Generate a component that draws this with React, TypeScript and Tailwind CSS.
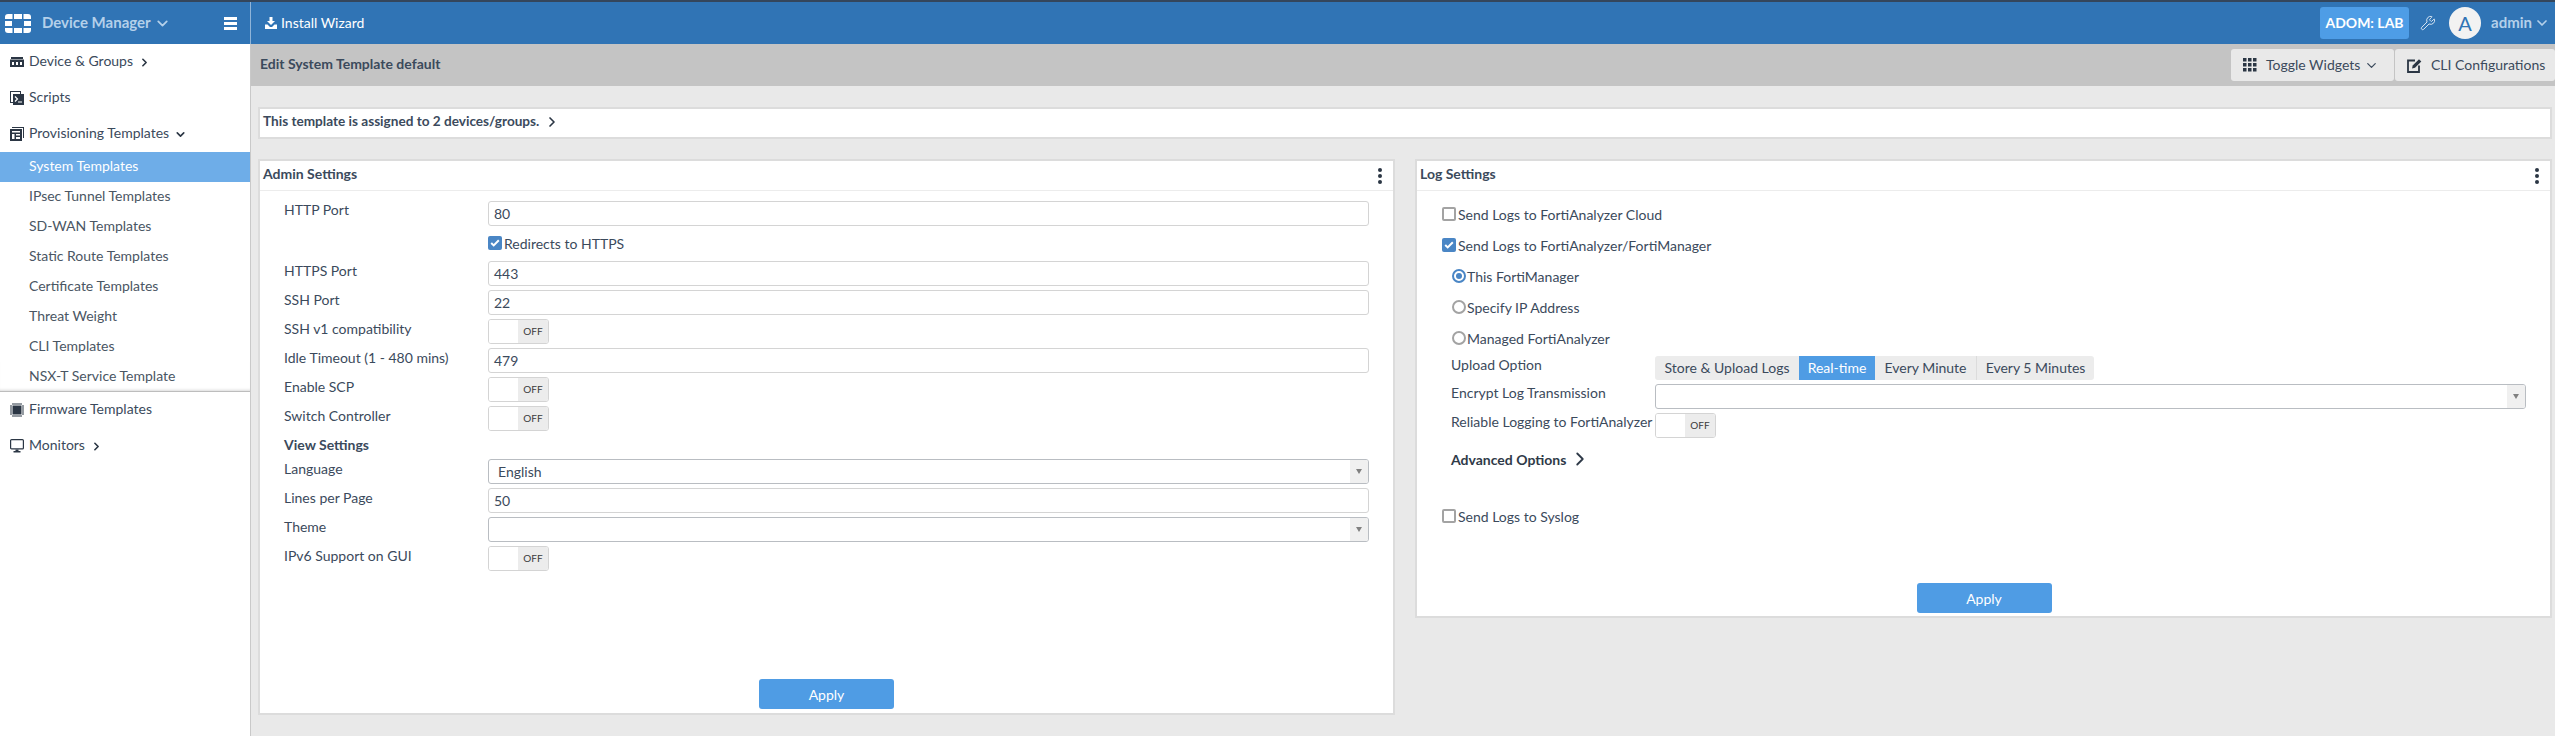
import type { ReactNode } from 'react';
import { ChevronDown, ChevronRight, Wrench } from 'lucide-react';

function Logo() {
    return (
        <svg width="26" height="19" viewBox="0 0 26 19" fill="#fff">
            <path d="M3 0h4.500v5H0V3q0-3 3-3z" />
            <path d="M9 0h8v5H9z" />
            <path d="M18.500 0H23q3 0 3 3v2h-7.500z" />
            <rect x="0" y="7" width="7" height="5" />
            <rect x="19" y="7" width="7" height="5" />
            <path d="M0 14h7.500v5H3q-3 0-3-3z" />
            <path d="M9 14h8v5H9z" />
            <path d="M18.500 14H26v2q0 3-3 3h-4.500z" />
        </svg>
    );
}

function DevicesIcon() {
    return (
        <svg width="14" height="14" viewBox="0 0 14 14" fill="#2b3644">
            <path d="M1 2h12v2H1z" />
            <path d="M0 4.500h14V12H0zM2 7v3h2V7zm4 0v3h2V7zm4 0v3h2V7z" fillRule="evenodd" />
        </svg>
    );
}

function ScriptsIcon() {
    return (
        <svg width="14" height="14" viewBox="0 0 14 14" fill="none">
            <rect x="0.500" y="0.500" width="10" height="11" stroke="#2b3644" />
            <rect x="3" y="3" width="11" height="11" fill="#2b3644" />
            <path d="M5 5.500l2.500 2.500L5 10.500M8 11h4" stroke="#fff" strokeWidth="1.200" />
        </svg>
    );
}

function TemplatesIcon() {
    return (
        <svg width="14" height="14" viewBox="0 0 14 14" fill="#2b3644">
            <path d="M2 0h12v11h-1V1H2z" />
            <path d="M0 2h12v12H0zM2 4v1.500h8V4zm0 3v5h2.500V7zm4 0v1.500h4V7zm0 3v2h4v-2z" fillRule="evenodd" />
        </svg>
    );
}

function ChipIcon() {
    return (
        <svg width="14" height="14" viewBox="0 0 14 14" fill="#2b3644">
            <rect x="2.500" y="2.500" width="9" height="9" />
            <path d="M0 3h2M0 5h2M0 7h2M0 9h2M0 11h2M12 3h2M12 5h2M12 7h2M12 9h2M12 11h2M3 0v2M5 0v2M7 0v2M9 0v2M11 0v2M3 12v2M5 12v2M7 12v2M9 12v2M11 12v2" stroke="#2b3644" strokeWidth="1" />
        </svg>
    );
}

function MonitorIcon() {
    return (
        <svg width="14" height="14" viewBox="0 0 14 14" fill="none">
            <rect x="0.600" y="0.600" width="12.800" height="9.300" rx="1" stroke="#2b3644" strokeWidth="1.200" />
            <path d="M5.500 10.500h3v1.500h2v1.500h-7V12h2z" fill="#2b3644" />
        </svg>
    );
}

function InstallIcon() {
    return (
        <svg width="12" height="12" viewBox="0 0 12 12" fill="#fff">
            <path d="M4.500 0h3v4H10L6 8 2 4h2.500z" />
            <path d="M0 7.500h2.500L5 10h2l2.500-2.500H12V12H0z" />
        </svg>
    );
}

function GridIcon() {
    return (
        <svg width="14" height="14" viewBox="0 0 14 14" fill="#2b3644">
            <rect x="0" y="0" width="3.500" height="3.500" /><rect x="5" y="0" width="3.500" height="3.500" /><rect x="10" y="0" width="3.500" height="3.500" />
            <rect x="0" y="5" width="3.500" height="3.500" /><rect x="5" y="5" width="3.500" height="3.500" /><rect x="10" y="5" width="3.500" height="3.500" />
            <rect x="0" y="10" width="3.500" height="3.500" /><rect x="5" y="10" width="3.500" height="3.500" /><rect x="10" y="10" width="3.500" height="3.500" />
        </svg>
    );
}

function EditIcon() {
    return (
        <svg width="15" height="15" viewBox="0 0 15 15" fill="none">
            <path d="M8 2.500H1v11.500h11V7.500" stroke="#2b3644" strokeWidth="1.800" />
            <path d="M5 10.500l.7-3L12 1.200l2.300 2.300L8 9.800z" fill="#2b3644" />
        </svg>
    );
}

function NavItem({ icon, label, arrow }: { icon: ReactNode; label: string; arrow?: 'right' | 'down' }) {
    return (
        <div className="h-[36px] flex items-center pl-[10px] text-[#3b4a5c]">
            <span className="w-[19px] flex items-center">{icon}</span>
            <span className="pb-[4px]">{label}</span>
            {arrow === 'right' && <ChevronRight size={13} strokeWidth={3} className="ml-[5px] text-[#2b3644]" />}
            {arrow === 'down' && <ChevronDown size={13} strokeWidth={3} className="ml-[5px] text-[#2b3644]" />}
        </div>
    );
}

function SubItem({ label, active }: { label: string; active?: boolean }) {
    return (
        <div className={`h-[30px] flex items-center pl-[29px] pb-[4px] ${active ? 'bg-[#6eade8] text-white' : 'text-[#4a5663]'}`}>
            {label}
        </div>
    );
}

function Row({ label, children, className, tight }: { label: string; children: ReactNode; className?: string; tight?: boolean }) {
    return (
        <div className={`flex h-[25px] ${className ?? 'mt-[4px]'}`}>
            <div className={`w-[204px] text-[#3b4a5c] ${tight ? 'leading-[17px]' : 'leading-[19px]'}`}>{label}</div>
            <div className="flex-1">{children}</div>
        </div>
    );
}

function TextInput({ value }: { value: string }) {
    return (
        <div className="h-[25px] border border-[#d4d4d4] rounded-[3px] pl-[5px] leading-[23px] text-[#3b4a5c]">{value}</div>
    );
}

function SelectBox({ value }: { value?: string }) {
    return (
        <div className="relative h-[25px] border border-[#b9bdc2] rounded-[3px] overflow-hidden pl-[9px] leading-[23px] text-[#3b4a5c]">
            {value}
            <span className="absolute right-0 top-0 h-full w-[18px] bg-[#f0f0f0] flex items-center justify-center">
                <span className="w-0 h-0 border-x-[3.500px] border-x-transparent border-t-[5px] border-t-[#808080]" />
            </span>
        </div>
    );
}

function Toggle() {
    return (
        <div className="w-[61px] h-[25px] flex border border-[#d4d4d4] rounded-[3px] overflow-hidden">
            <div className="w-[29px] bg-white" />
            <div className="flex-1 bg-[#ececec] flex items-center justify-center text-[10px] text-[#3b3b3b]">OFF</div>
        </div>
    );
}

function Check({ checked }: { checked?: boolean }) {
    return checked ? (
        <span className="w-[14px] h-[14px] rounded-[2px] bg-[#4a86c5] flex items-center justify-center shrink-0">
            <svg width="10" height="8" viewBox="0 0 10 8" fill="none"><path d="M1.200 4l2.500 2.400L8.800 1.200" stroke="#fff" strokeWidth="2" /></svg>
        </span>
    ) : (
        <span className="w-[14px] h-[14px] rounded-[2px] border-2 border-[#a3a3a3] bg-white shrink-0" />
    );
}

function CheckRow({ checked, label, className }: { checked?: boolean; label: string; className: string }) {
    return (
        <div className={`flex items-center h-[14px] gap-[2px] text-[#3b4a5c] ${className}`}>
            <Check checked={checked} />
            <span>{label}</span>
        </div>
    );
}

function Radio({ checked, label, className }: { checked?: boolean; label: string; className: string }) {
    return (
        <div className={`flex items-center h-[14px] gap-[1px] pl-[10px] text-[#3b4a5c] ${className}`}>
            {checked ? (
                <span className="w-[14px] h-[14px] rounded-full border-2 border-[#4a86c5] flex items-center justify-center shrink-0">
                    <span className="w-[6px] h-[6px] rounded-full bg-[#4a86c5]" />
                </span>
            ) : (
                <span className="w-[14px] h-[14px] rounded-full border-2 border-[#a3a3a3] shrink-0" />
            )}
            <span>{label}</span>
        </div>
    );
}

function Panel({ title, className, children }: { title: string; className: string; children: ReactNode }) {
    return (
        <div className={`flex flex-col bg-white border-2 border-[#dcdcdc] ${className}`}>
            <div className="h-[30px] shrink-0 flex items-center justify-between pl-[3px] pr-[11px] border-b border-[#ececec]">
                <span className="font-bold text-[#3b4a5c] pb-[4px]">{title}</span>
                <span className="flex flex-col gap-[2px]">
                    <span className="w-[4px] h-[4px] rounded-full bg-[#2b3644]" />
                    <span className="w-[4px] h-[4px] rounded-full bg-[#2b3644]" />
                    <span className="w-[4px] h-[4px] rounded-full bg-[#2b3644]" />
                </span>
            </div>
            {children}
        </div>
    );
}

function ApplyButton() {
    return (
        <button className="mx-auto w-[135px] h-[30px] rounded-[3px] bg-[#4f9ce4] text-white text-[14px]">Apply</button>
    );
}

export default function App() {
    return (
        <div className="h-[736px] w-[2555px] overflow-hidden flex flex-col bg-[#e9e9e9] text-[14px] font-['Lato',sans-serif]">
            <div className="h-[2px] shrink-0 bg-[#34465c]" />

            {/* header */}
            <div className="h-[42px] shrink-0 flex items-center bg-[#3074b5]">
                <div className="w-[251px] h-full flex items-center border-r border-[#8fb4d8] pl-[5px] pr-[13px]">
                    <Logo />
                    <span className="ml-[11px] pb-[2px] text-[15px] font-bold text-[#b4d0ea]">Device Manager</span>
                    <ChevronDown size={17} strokeWidth={2.500} className="ml-[3px] text-[#b4d0ea]" />
                    <div className="ml-auto flex flex-col gap-[2px]">
                        <span className="w-[13px] h-[3px] bg-white" />
                        <span className="w-[13px] h-[3px] bg-white" />
                        <span className="w-[13px] h-[3px] bg-white" />
                    </div>
                </div>
                <div className="flex items-center gap-[4px] ml-[14px] text-white">
                    <InstallIcon />
                    <span className="pb-[2px]">Install Wizard</span>
                </div>
                <div className="ml-auto flex items-center pr-[5px]">
                    <div className="h-[32px] w-[89px] pb-[2px] flex items-center justify-center rounded-[3px] bg-[#4e9de6] text-white font-bold">ADOM: LAB</div>
                    <Wrench size={16} strokeWidth={1.500} className="ml-[11px] text-[#d5e4f2]" />
                    <div className="ml-[13px] w-[32px] h-[32px] rounded-full bg-[#f2f2f2] flex items-center justify-center text-[#3074b5] text-[20px]">A</div>
                    <span className="ml-[10px] pb-[2px] text-[15px] font-bold text-[#b4d0ea]">admin</span>
                    <ChevronDown size={16} strokeWidth={2.500} className="ml-[2px] text-[#b4d0ea]" />
                </div>
            </div>

            <div className="flex-1 flex min-h-0">
                {/* sidebar */}
                <div className="w-[251px] shrink-0 bg-white border-r border-[#c9c9c9]">
                    <NavItem icon={<DevicesIcon />} label="Device & Groups" arrow="right" />
                    <NavItem icon={<ScriptsIcon />} label="Scripts" />
                    <NavItem icon={<TemplatesIcon />} label="Provisioning Templates" arrow="down" />
                    <SubItem label="System Templates" active />
                    <SubItem label="IPsec Tunnel Templates" />
                    <SubItem label="SD-WAN Templates" />
                    <SubItem label="Static Route Templates" />
                    <SubItem label="Certificate Templates" />
                    <SubItem label="Threat Weight" />
                    <SubItem label="CLI Templates" />
                    <div className="h-[30px] border-b border-[#bdbdbd] shadow-[inset_0_-3px_3px_-2px_rgba(0,0,0,0.15)]">
                        <SubItem label="NSX-T Service Template" />
                    </div>
                    <NavItem icon={<ChipIcon />} label="Firmware Templates" />
                    <NavItem icon={<MonitorIcon />} label="Monitors" arrow="right" />
                </div>

                <div className="flex-1 min-w-0 flex flex-col">
                    {/* title bar */}
                    <div className="h-[42px] shrink-0 flex items-center justify-between bg-[#c4c4c4]">
                        <span className="ml-[9px] pb-[4px] font-bold text-[#3b4a5c]">Edit System Template default</span>
                        <div className="flex gap-[1px]">
                            <div className="w-[163px] h-[32px] rounded-[3px] bg-[#e9e9e9] flex items-center pl-[12px] text-[#3b4a5c]">
                                <GridIcon />
                                <span className="ml-[9px] pb-[2px]">Toggle Widgets</span>
                                <ChevronDown size={15} strokeWidth={2} className="ml-[4px]" />
                            </div>
                            <div className="w-[160px] h-[32px] rounded-[3px] bg-[#e9e9e9] flex items-center pl-[12px] text-[#3b4a5c]">
                                <EditIcon />
                                <span className="ml-[9px] pb-[2px]">CLI Configurations</span>
                            </div>
                        </div>
                    </div>

                    <div className="flex-1 pl-[7px] pr-[3px] pt-[21px]">
                        <div className="h-[32px] flex items-center bg-white border-2 border-[#dcdcdc] pl-[3px] font-bold text-[#3b4a5c]">
                            <span className="pb-[4px] text-[13.600px]">This template is assigned to 2 devices/groups.</span>
                            <ChevronRight size={16} strokeWidth={2.500} className="ml-[5px] mb-[3px] text-[#2b3644]" />
                        </div>

                        <div className="mt-[20px] grid grid-cols-2 gap-[20px] items-start">
                            <Panel title="Admin Settings" className="h-[556px]">
                                <div className="flex-1 flex flex-col pl-[24px] pr-[24px] pt-[10px]">
                                    <Row label="HTTP Port" className="mt-0" tight><TextInput value="80" /></Row>
                                    <div className="ml-[204px] mt-[10px]">
                                        <CheckRow checked label="Redirects to HTTPS" className="" />
                                    </div>
                                    <Row label="HTTPS Port" className="mt-[11px]"><TextInput value="443" /></Row>
                                    <Row label="SSH Port"><TextInput value="22" /></Row>
                                    <Row label="SSH v1 compatibility"><Toggle /></Row>
                                    <Row label="Idle Timeout (1 - 480 mins)"><TextInput value="479" /></Row>
                                    <Row label="Enable SCP"><Toggle /></Row>
                                    <Row label="Switch Controller"><Toggle /></Row>
                                    <div className="mt-[4px] h-[24px] font-bold text-[#3b4a5c] leading-[19px]">View Settings</div>
                                    <Row label="Language" className="mt-0"><SelectBox value="English" /></Row>
                                    <Row label="Lines per Page"><TextInput value="50" /></Row>
                                    <Row label="Theme"><SelectBox /></Row>
                                    <Row label="IPv6 Support on GUI"><Toggle /></Row>
                                    <div className="mt-auto mb-[4px] flex">
                                        <ApplyButton />
                                    </div>
                                </div>
                            </Panel>

                            <Panel title="Log Settings" className="h-[459px]">
                                <div className="flex-1 flex flex-col pl-[25px] pr-[24px] pt-[16px]">
                                    <CheckRow label="Send Logs to FortiAnalyzer Cloud" className="" />
                                    <CheckRow checked label="Send Logs to FortiAnalyzer/FortiManager" className="mt-[17px]" />
                                    <Radio checked label="This FortiManager" className="mt-[17px]" />
                                    <Radio label="Specify IP Address" className="mt-[17px]" />
                                    <Radio label="Managed FortiAnalyzer" className="mt-[17px]" />
                                    <div className="ml-[9px] mt-[11px] flex h-[24px]">
                                        <div className="w-[204px] leading-[17px] text-[#3b4a5c]">Upload Option</div>
                                        <div className="flex rounded-[3px] overflow-hidden bg-[#ececec] text-[#3b4a5c] text-[14px]">
                                            <div className="w-[144px] flex items-center justify-center pb-[2px]">Store &amp; Upload Logs</div>
                                            <div className="w-[76px] flex items-center justify-center pb-[2px] bg-[#4f9ce4] text-white">Real-time</div>
                                            <div className="w-[101px] flex items-center justify-center pb-[2px]">Every Minute</div>
                                            <div className="w-[118px] flex items-center justify-center pb-[2px] border-l border-[#dcdcdc]">Every 5 Minutes</div>
                                        </div>
                                    </div>
                                    <Row label="Encrypt Log Transmission" className="ml-[9px] mt-[4px]" tight><SelectBox /></Row>
                                    <Row label="Reliable Logging to FortiAnalyzer" className="ml-[9px] mt-[4px]" tight><Toggle /></Row>
                                    <div className="ml-[9px] mt-[10px] h-[22px] flex items-center gap-[3px] font-bold text-[#2f3a48]">
                                        Advanced Options
                                        <ChevronRight size={22} strokeWidth={2} />
                                    </div>
                                    <CheckRow label="Send Logs to Syslog" className="mt-[39px]" />
                                    <div className="mt-auto mb-[3px] flex">
                                        <ApplyButton />
                                    </div>
                                </div>
                            </Panel>
                        </div>
                    </div>
                </div>
            </div>
        </div>
    );
}
